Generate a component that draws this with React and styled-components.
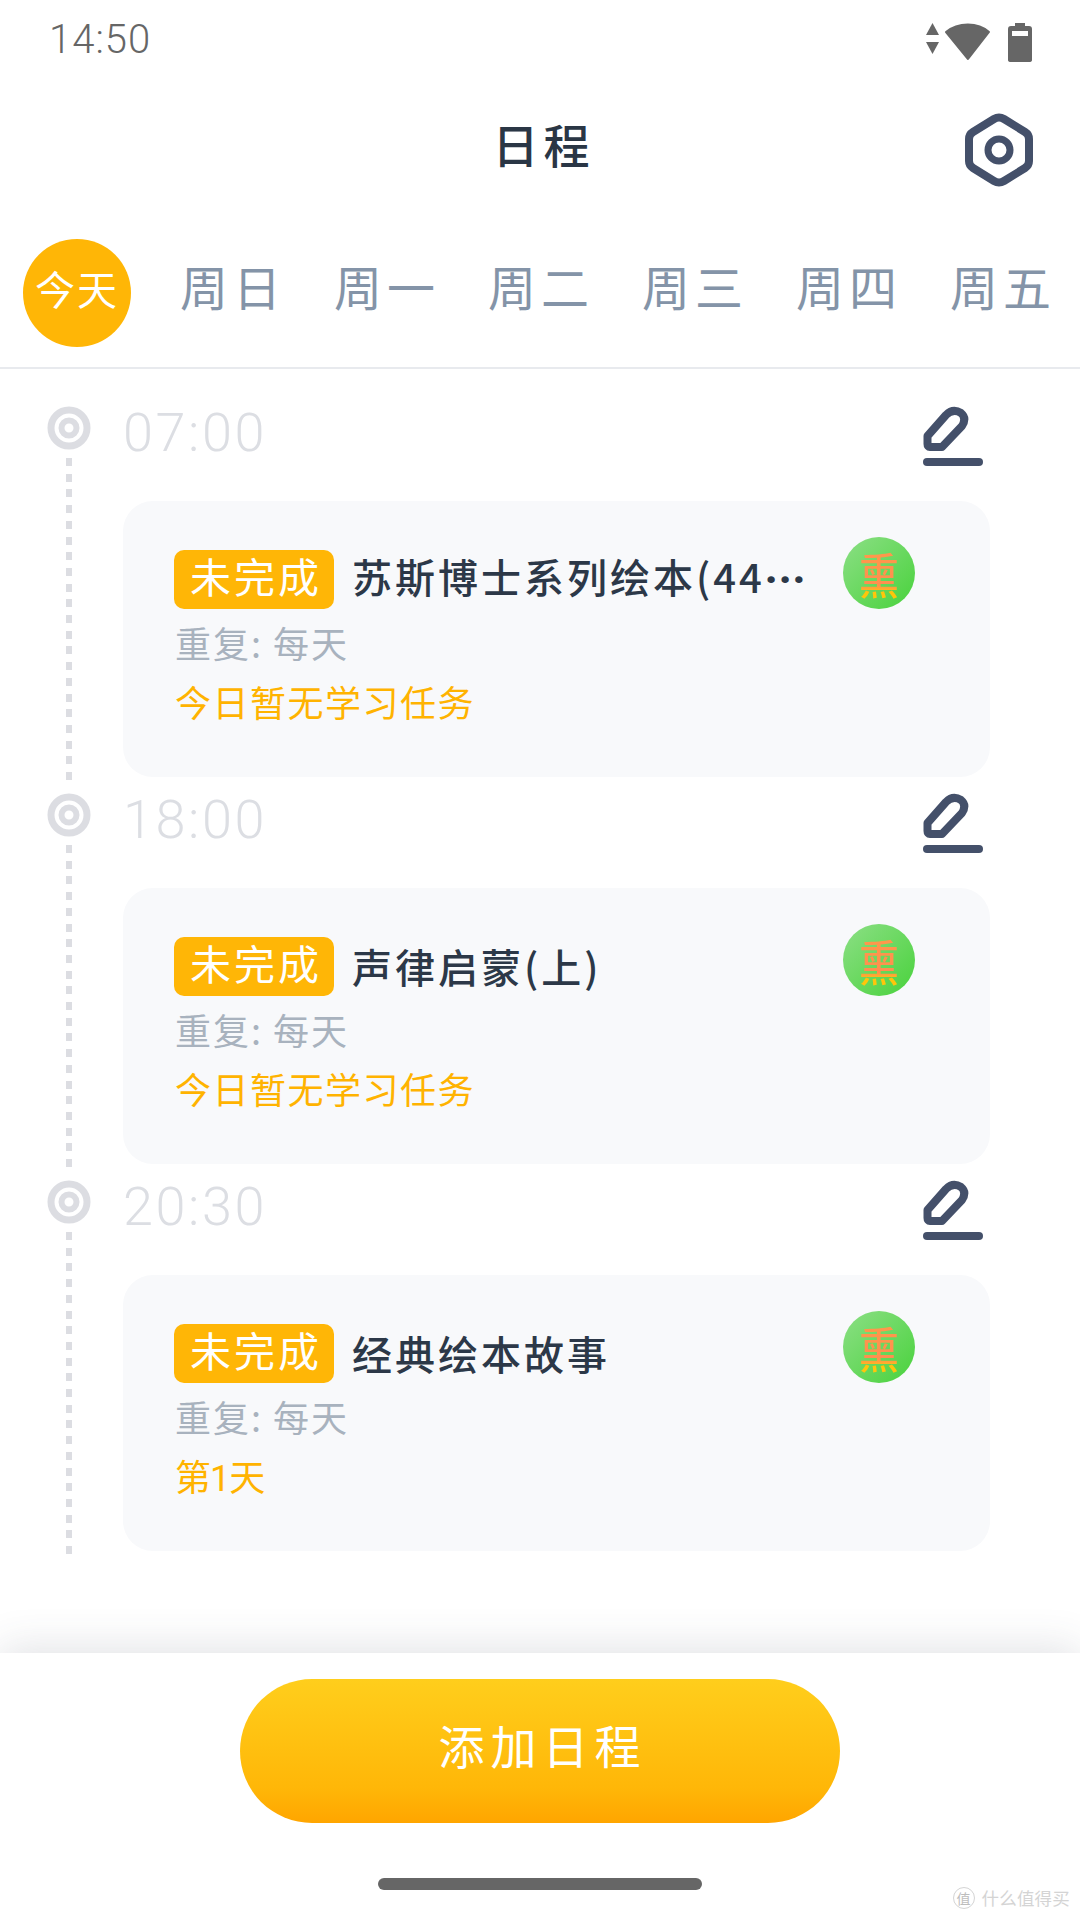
import React from "react";
import styled, { createGlobalStyle } from "styled-components";

const GlobalStyle = createGlobalStyle`
  html, body {
    margin: 0;
    padding: 0;
    background: #fff;
  }
  * {
    box-sizing: border-box;
  }
`;

const Page = styled.div`
  position: relative;
  width: 1080px;
  height: 1920px;
  overflow: hidden;
  display: flex;
  flex-direction: column;
  background: #fff;
  font-family: "Noto Sans CJK SC", "Noto Sans", sans-serif;
`;

const StatusBar = styled.div`
  height: 78px;
  padding: 16px 48px 0 49px;
  display: flex;
  justify-content: space-between;
  align-items: flex-start;
`;

const Clock = styled.span`
  font-family: Roboto, sans-serif;
  font-weight: 300;
  font-size: 40px;
  line-height: 48px;
  letter-spacing: 1px;
  color: #666;
`;

const StatusIcons = styled.svg`
  margin-top: 6px;
`;

const Header = styled.header`
  height: 140px;
  padding: 0 47px 0 0;
  display: flex;
  align-items: center;
`;

const Title = styled.h1`
  flex: 1;
  margin: 0;
  padding: 0 0 10px 122px;
  text-align: center;
  font-size: 46px;
  line-height: 60px;
  font-weight: 500;
  letter-spacing: 5px;
  color: #2a3645;
`;

const GearSvg = styled.svg`
  margin-top: 3px;
`;

const Tabs = styled.nav`
  height: 151px;
  padding: 21px 0 0 23px;
  display: flex;
  align-items: flex-start;
  border-bottom: 2px solid #e8eaee;
`;

const TodayTab = styled.div`
  width: 108px;
  height: 108px;
  margin-right: 49px;
  flex: none;
  border-radius: 50%;
  background: #ffb606;
  color: #fff;
  display: flex;
  align-items: center;
  justify-content: center;
  font-size: 40px;
  letter-spacing: 2px;
  padding-bottom: 10px;
`;

const DayTab = styled.div`
  width: 154px;
  height: 108px;
  flex: none;
  display: flex;
  align-items: center;
  font-size: 48px;
  letter-spacing: 5px;
  padding-bottom: 16px;
  color: #8494a8;
`;

const Timeline = styled.main`
  flex: 1;
  padding: 36px 0 0 47px;
  display: flex;
  flex-direction: column;
`;

const Item = styled.section`
  height: 387px;
  display: flex;
  flex: none;
`;

const Rail = styled.div`
  width: 44px;
  padding: 1px 0 10px;
  margin-right: 32px;
  display: flex;
  flex-direction: column;
  align-items: center;
`;

const DotSvg = styled.svg`
  flex: none;
`;

const Dash = styled.div`
  flex: 1;
  width: 6px;
  margin-top: 8px;
  background: repeating-linear-gradient(
    to bottom,
    #dcdde2 0,
    #dcdde2 8px,
    transparent 8px,
    transparent 15.7px
  );
`;

const Body = styled.div`
  width: 867px;
`;

const TimeRow = styled.div`
  height: 96px;
  padding-right: 7px;
  display: flex;
  justify-content: space-between;
  align-items: flex-start;
`;

const Time = styled.span`
  font-family: Roboto, sans-serif;
  font-weight: 300;
  font-size: 54px;
  line-height: 54px;
  letter-spacing: 2.6px;
  margin-top: 1px;
  color: #dcdee3;
`;

const EditIcon = styled.svg`
  margin-top: 1px;
`;

const Card = styled.article`
  height: 276px;
  padding: 36px 75px 0 51px;
  border-radius: 30px;
  background: #f8f9fb;
`;

const CardTop = styled.div`
  height: 72px;
  display: flex;
  align-items: flex-end;
`;

const Badge = styled.span`
  width: 160px;
  height: 59px;
  flex: none;
  margin-right: 18px;
  padding: 0 0 9px 4px;
  border-radius: 10px;
  background: #ffb606;
  color: #fff;
  display: flex;
  align-items: center;
  justify-content: center;
  font-size: 41px;
  letter-spacing: 3px;
`;

const CardTitle = styled.span`
  flex: 1;
  min-width: 0;
  font-size: 40px;
  line-height: 59px;
  font-weight: 500;
  letter-spacing: 3px;
  white-space: nowrap;
  color: #2c3848;
`;

const More = styled.span`
  font-family: Roboto, sans-serif;
  font-weight: 900;
  letter-spacing: 1px;
`;

const Avatar = styled.div`
  width: 72px;
  height: 72px;
  flex: none;
  border-radius: 50%;
  background: linear-gradient(135deg, #8cdf85, #49d23c);
  display: flex;
  align-items: center;
  justify-content: center;
`;

const AvatarGlyph = styled.span`
  font-size: 42px;
  line-height: 48px;
  font-weight: 500;
  transform: scale(0.95, 1.15);
  background: linear-gradient(to bottom, #ff9a4a 0, #ff8f4f 72%, #ffc60a 85%);
  -webkit-background-clip: text;
  background-clip: text;
  color: transparent;
`;

const Repeat = styled.div`
  margin: 6px 0 0 1px;
  font-size: 36px;
  line-height: 54px;
  letter-spacing: 2px;
  color: #a8b2be;
`;

const Progress = styled.div`
  margin: 9px 0 0 1px;
  font-family: Roboto, "Noto Sans CJK SC", sans-serif;
  font-size: 36px;
  line-height: 54px;
  letter-spacing: ${({ $tight }) => ($tight ? "-1px" : "1.5px")};
  color: #ffb300;
`;

const Footer = styled.footer`
  position: absolute;
  left: 0;
  right: 0;
  bottom: 0;
  height: 267px;
  padding-top: 26px;
  display: flex;
  flex-direction: column;
  align-items: center;
  background: #fff;
  box-shadow: 0 -4px 40px rgba(60, 70, 90, 0.16);
`;

const AddButton = styled.button`
  width: 600px;
  height: 144px;
  border: 0;
  padding: 0 0 14px 5px;
  border-radius: 72px;
  background: linear-gradient(to bottom, #ffce1c, #ffb708 75%, #ffa500);
  color: #fff;
  font-family: inherit;
  font-size: 46px;
  letter-spacing: 6px;
`;

const HomeBar = styled.div`
  width: 324px;
  height: 12px;
  margin-top: 55px;
  border-radius: 6px;
  background: #666;
`;

const Watermark = styled.div`
  position: absolute;
  right: 10px;
  bottom: 10px;
  display: flex;
  align-items: center;
  gap: 7px;
  font-size: 17.5px;
  letter-spacing: 0.2px;
  color: #d4d4d4;
`;

const WatermarkBadge = styled.span`
  width: 22px;
  height: 22px;
  border: 1px solid #d4d4d4;
  border-radius: 50%;
  display: flex;
  align-items: center;
  justify-content: center;
  font-size: 14px;
  color: #bdbdbd;
`;

const StatusGlyphs = () => (
  <StatusIcons width="106" height="42" viewBox="0 0 106 42" fill="#666">
    <path d="M6.5 1L13 13H0Z" />
    <path d="M0 20H13L6.5 32Z" />
    <path d="M20 10C32 0 52 0 63 10L42 37Z" stroke="#666" strokeWidth="2" strokeLinejoin="round" />
    <path d="M89 1H99V4H103Q106 4 106 7V38Q106 40 103 40H85Q82 40 82 38V7Q82 4 85 4H89Z" />
    <rect x="86" y="9" width="16" height="5" fill="#fff" />
  </StatusIcons>
);

const GearIcon = () => (
  <GearSvg width="68" height="74" viewBox="0 0 68 74" fill="none" stroke="#44506a" strokeWidth="8">
    <path d="M29 6Q34 3 39 6L60 19Q64 21.500 64 26V48Q64 52.500 60 55L39 68Q34 71 29 68L8 55Q4 52.500 4 48V26Q4 21.500 8 19Z" />
    <circle cx="34" cy="37" r="11" strokeWidth="7" />
  </GearSvg>
);

const PenIcon = () => (
  <EditIcon width="60" height="62" viewBox="0 0 60 62" fill="none" stroke="#44506a" strokeWidth="8">
    <path d="M4.500 30L23 9Q30 2 38 7Q44 12 39 20L19 41H7Q4.500 41 4.500 38Z" strokeLinejoin="round" />
    <path d="M4 56H56" strokeLinecap="round" />
  </EditIcon>
);

const TimelineDot = () => (
  <DotSvg width="44" height="44" viewBox="0 0 44 44" fill="none" stroke="#dcdde2">
    <circle cx="22" cy="22" r="18" strokeWidth="7" />
    <circle cx="22" cy="22" r="7.5" strokeWidth="6" />
  </DotSvg>
);

const days = ["周日", "周一", "周二", "周三", "周四", "周五"];

const schedules = [
  { time: "07:00", title: "苏斯博士系列绘本(44", clipped: true, progress: "今日暂无学习任务" },
  { time: "18:00", title: "声律启蒙(上)", progress: "今日暂无学习任务" },
  { time: "20:30", title: "经典绘本故事", progress: "第1天", tight: true },
];

const App = () => (
  <Page>
    <GlobalStyle />
    <StatusBar>
      <Clock>14:50</Clock>
      <StatusGlyphs />
    </StatusBar>
    <Header>
      <Title>日程</Title>
      <GearIcon />
    </Header>
    <Tabs>
      <TodayTab>今天</TodayTab>
      {days.map((day) => (
        <DayTab key={day}>{day}</DayTab>
      ))}
    </Tabs>
    <Timeline>
      {schedules.map((item) => (
        <Item key={item.time}>
          <Rail>
            <TimelineDot />
            <Dash />
          </Rail>
          <Body>
            <TimeRow>
              <Time>{item.time}</Time>
              <PenIcon />
            </TimeRow>
            <Card>
              <CardTop>
                <Badge>未完成</Badge>
                <CardTitle>
                  {item.title}
                  {item.clipped ? <More>···</More> : null}
                </CardTitle>
                <Avatar>
                  <AvatarGlyph>熏</AvatarGlyph>
                </Avatar>
              </CardTop>
              <Repeat>重复: 每天</Repeat>
              <Progress $tight={item.tight}>{item.progress}</Progress>
            </Card>
          </Body>
        </Item>
      ))}
    </Timeline>
    <Footer>
      <AddButton>添加日程</AddButton>
      <HomeBar />
      <Watermark>
        <WatermarkBadge>值</WatermarkBadge>
        什么值得买
      </Watermark>
    </Footer>
  </Page>
);

export default App;
